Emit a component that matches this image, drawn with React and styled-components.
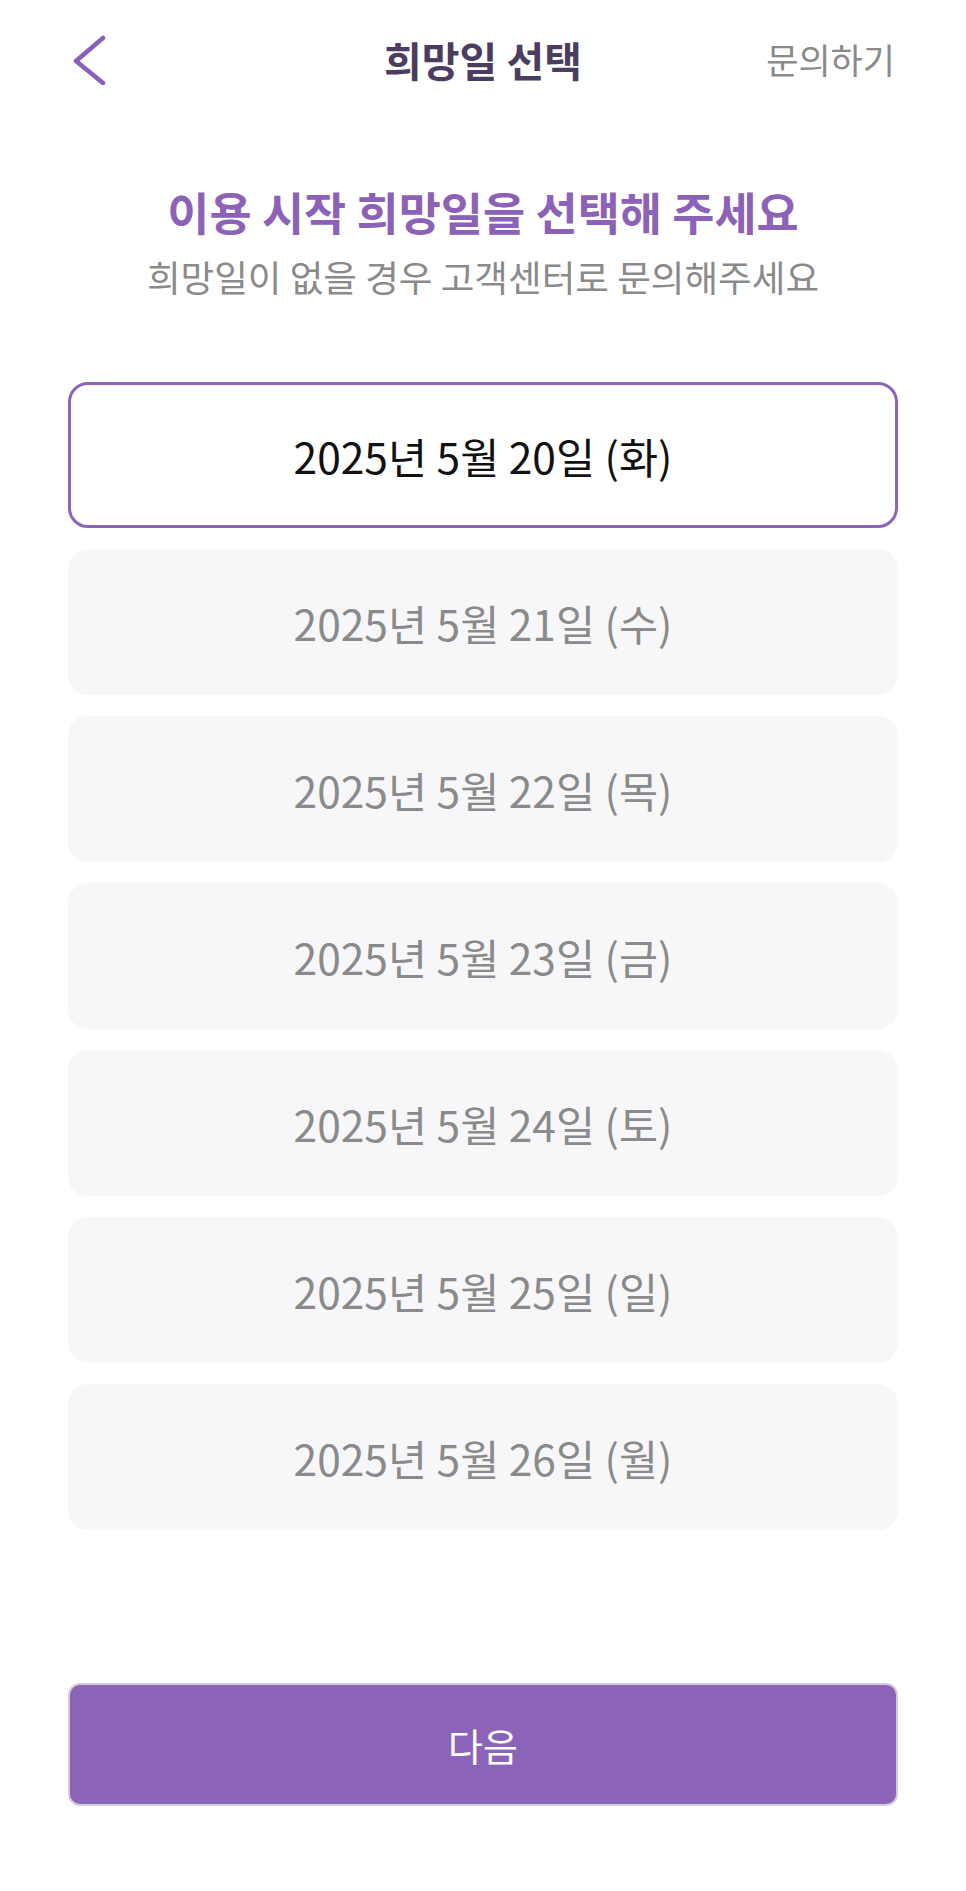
import React, { useState } from "react";
import styled, { createGlobalStyle } from "styled-components";

const Global = createGlobalStyle`
  html, body { margin: 0; padding: 0; background: #ffffff; }
  body { font-family: "Noto Sans CJK KR", "Noto Sans", sans-serif; }
  * { box-sizing: border-box; }
`;

const Page = styled.div`
  width: 966px;
  min-height: 1891px;
  display: flex;
  flex-direction: column;
  padding: 0 68px;
`;

const Header = styled.header`
  height: 118px;
  display: grid;
  grid-template-columns: 1fr auto 1fr;
  align-items: center;
`;

const BackButton = styled.button`
  justify-self: start;
  background: none;
  border: none;
  padding: 0;
  margin-left: 2px;
  width: 44px;
  height: 56px;
  display: flex;
  align-items: center;
  cursor: pointer;
`;

const NavTitle = styled.h1`
  margin: 0;
  font-size: 41px;
  line-height: 56px;
  font-weight: 700;
  color: #4b3d5f;
`;

const NavLink = styled.a`
  justify-self: end;
  margin-right: 3px;
  font-size: 35px;
  line-height: 56px;
  color: #8a8a8a;
  text-decoration: none;
`;

const Intro = styled.section`
  margin-top: 66px;
  display: flex;
  flex-direction: column;
  align-items: center;
  gap: 16px;
`;

const Heading = styled.h2`
  margin: 0;
  font-size: 45.8px;
  line-height: 55px;
  font-weight: 700;
  color: #8c62b9;
`;

const Sub = styled.p`
  margin: 0;
  font-size: 36.6px;
  line-height: 44px;
  color: #8a8a8a;
`;

const List = styled.div`
  margin-top: 83px;
  display: flex;
  flex-direction: column;
  gap: 21px;
`;

const DateCard = styled.button`
  height: 146px;
  width: 100%;
  border-radius: 20px;
  border: 3.5px solid ${(p) => (p.$active ? "#8c65bb" : "transparent")};
  background: ${(p) => (p.$active ? "#ffffff" : "#f7f7f9")};
  color: ${(p) => (p.$active ? "#111111" : "#8a8a8a")};
  font-family: "Noto Sans CJK KR", "Noto Sans", sans-serif;
  font-size: 42.5px;
  font-weight: 400;
  display: flex;
  align-items: center;
  justify-content: center;
  cursor: pointer;
`;

const Spacer = styled.div`
  height: 153px;
`;

const NextButton = styled.button`
  height: 123px;
  width: 100%;
  border-radius: 12px;
  border: 2px solid #d3cdda;
  background: #8b63b9;
  color: #ffffff;
  font-family: "Noto Sans CJK KR", "Noto Sans", sans-serif;
  font-size: 38px;
  font-weight: 400;
  cursor: pointer;
`;

const dates = [
  "2025년 5월 20일 (화)",
  "2025년 5월 21일 (수)",
  "2025년 5월 22일 (목)",
  "2025년 5월 23일 (금)",
  "2025년 5월 24일 (토)",
  "2025년 5월 25일 (일)",
  "2025년 5월 26일 (월)",
];

export default function App() {
  const [selected, setSelected] = useState(0);
  return (
    <>
      <Global />
      <Page>
        <Header>
          <BackButton aria-label="뒤로">
            <svg width="40" height="52" viewBox="0 0 40 52">
              <path
                d="M33 5 L6 28 L33 50"
                fill="none"
                stroke="#8a5fc0"
                strokeWidth="4.5"
                strokeLinecap="round"
                strokeLinejoin="round"
              />
            </svg>
          </BackButton>
          <NavTitle>희망일 선택</NavTitle>
          <NavLink href="#">문의하기</NavLink>
        </Header>
        <Intro>
          <Heading>이용 시작 희망일을 선택해 주세요</Heading>
          <Sub>희망일이 없을 경우 고객센터로 문의해주세요</Sub>
        </Intro>
        <List>
          {dates.map((d, i) => (
            <DateCard key={d} $active={i === selected} onClick={() => setSelected(i)}>
              {d}
            </DateCard>
          ))}
        </List>
        <Spacer />
        <NextButton>다음</NextButton>
      </Page>
    </>
  );
}
